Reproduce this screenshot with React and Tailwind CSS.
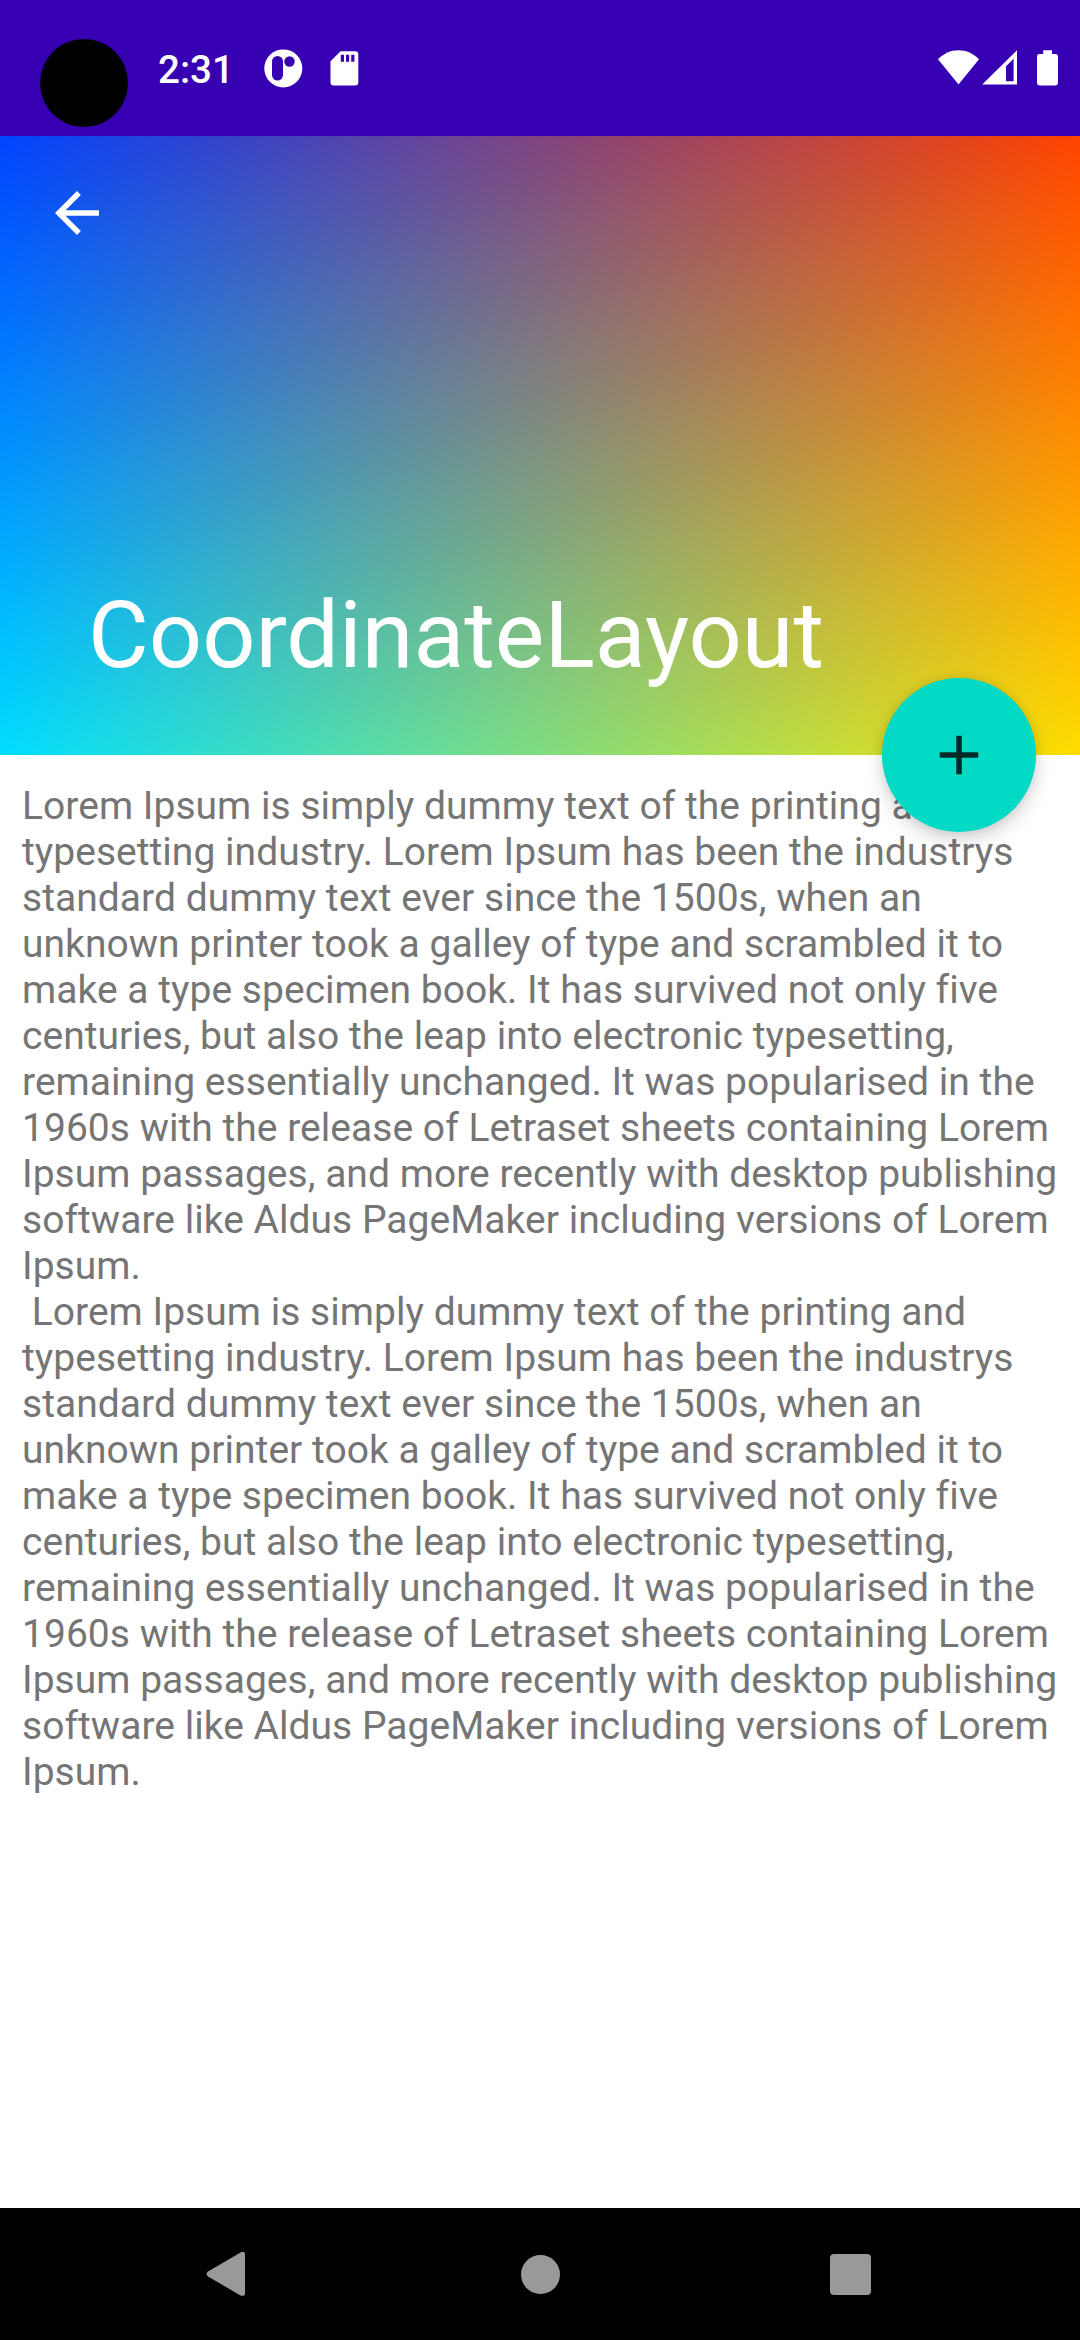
const PARAGRAPH = [
  "typesetting industry. Lorem Ipsum has been the industrys",
  "standard dummy text ever since the 1500s, when an",
  "unknown printer took a galley of type and scrambled it to",
  "make a type specimen book. It has survived not only five",
  "centuries, but also the leap into electronic typesetting,",
  "remaining essentially unchanged. It was popularised in the",
  "1960s with the release of Letraset sheets containing Lorem",
  "Ipsum passages, and more recently with desktop publishing",
  "software like Aldus PageMaker including versions of Lorem",
  "Ipsum.",
];
const OPENING = "Lorem Ipsum is simply dummy text of the printing and";
const BODY = [OPENING, ...PARAGRAPH, " " + OPENING, ...PARAGRAPH].join("\n");

function StatusBar() {
  return (
    <div className="flex h-[136px] shrink-0 items-start bg-[#3700b3] text-white">
      <div className="ml-[40px] mt-[39px] size-[88px] rounded-full bg-black" />
      <span className="ml-[30px] mt-[47px] w-[72px] whitespace-nowrap text-[38.5px] font-medium leading-[46px]">
        2:31
      </span>
      <svg className="ml-[34px] mt-[49px] h-[39px] w-[39px]" viewBox="0 0 39 39">
        <circle cx="19.3" cy="19.4" r="19" fill="currentColor" />
        <rect x="8" y="7" width="11" height="24.5" rx="5.5" fill="#3700b3" />
        <circle cx="25.5" cy="12.5" r="5.2" fill="#3700b3" />
      </svg>
      <svg className="ml-[27px] mt-[51px] h-[35px] w-[29px]" viewBox="0 0 29 35">
        <path
          fill="currentColor"
          fillRule="evenodd"
          d="M10.6 0.3H25.1Q28.3 0.3 28.3 3.5V31.3Q28.3 34.5 25.1 34.5H3.7Q0.5 34.5 0.5 31.3V10.3ZM10.8 3.7V10.7H14V3.7ZM16 3.7V10.7H19.2V3.7ZM21.2 3.7V10.7H24.4V3.7Z"
        />
      </svg>
      <svg className="ml-auto mt-[50px] h-[35px] w-[41px]" viewBox="0 0 41 35">
        <path fill="currentColor" d="M0 9.3C5.5 3.6 12.5 0.3 20.5 0.3S35.5 3.6 41 9.3L20.5 34.6Z" />
      </svg>
      <svg className="ml-[3px] mt-[50px] h-[35px] w-[35px]" viewBox="0 0 35 35">
        <path fill="currentColor" fillRule="evenodd" d="M35 0.3V34.6H0.2ZM31.6 8.8L24 16.2V31.3H31.6Z" />
      </svg>
      <svg className="ml-[20px] mr-[22px] mt-[50px] h-[36px] w-[21px]" viewBox="0 0 21 36">
        <path
          fill="currentColor"
          d="M6.2 0.3H15V4H18.6Q21 4 21 6.4V33.1Q21 35.5 18.6 35.5H2.4Q0 35.5 0 33.1V6.4Q0 4 2.4 4H6.2Z"
        />
      </svg>
    </div>
  );
}

function Header() {
  return (
    <header className="relative flex h-[619px] shrink-0 flex-col justify-between bg-[linear-gradient(to_right,#0000ff,#ff0000),linear-gradient(to_bottom,#004400,#00dd00)] bg-blend-screen text-white">
      <button aria-label="Back" className="ml-[44px] mt-[44px] size-[66px]">
        <svg viewBox="0 0 24 24" className="size-full" fill="currentColor">
          <path d="M20 11H7.83l5.59-5.59L12 4l-8 8 8 8 1.41-1.41L7.83 13H20v-2z" />
        </svg>
      </button>
      <h1 className="mb-[65px] ml-[88px] whitespace-nowrap text-[93.5px] font-normal leading-[110px]">
        CoordinateLayout
      </h1>
      <button
        aria-label="Add"
        className="absolute -bottom-[77px] right-[44px] flex size-[154px] items-center justify-center rounded-full bg-[#03dac5] text-[#022b27] shadow-[0_8px_18px_rgba(0,0,0,0.17),0_0_8px_rgba(0,0,0,0.08)]"
      >
        <svg viewBox="0 0 24 24" className="size-[66px]" fill="currentColor">
          <path d="M19 13h-6v6h-2v-6H5v-2h6V5h2v6h6v2z" />
        </svg>
      </button>
    </header>
  );
}

function NavigationBar() {
  return (
    <nav className="flex h-[132px] shrink-0 items-center bg-black text-[#999999]">
      <svg className="ml-[206px] h-[46px] w-[39px]" viewBox="0 0 39 46" fill="currentColor">
        <path d="M2 20.5L34.5 1.4Q39-0.5 39 3.5V42Q39 46 34.5 44.4L2 25.5Q-1 23 2 20.5Z" />
      </svg>
      <div className="ml-[276px] size-[39px] rounded-full bg-[#999999]" />
      <div className="ml-[270px] mt-[1px] size-[41px] rounded-[4px] bg-[#999999]" />
    </nav>
  );
}

export default function App() {
  return (
    <div className="flex h-[2340px] w-[1080px] flex-col overflow-hidden bg-white font-[Roboto,sans-serif]">
      <StatusBar />
      <Header />
      <main className="flex-1 px-[22px] pt-[28px]">
        <p className="whitespace-pre text-[39px] leading-[46px] tracking-[0.03px] text-[#757575]">{BODY}</p>
      </main>
      <NavigationBar />
    </div>
  );
}
